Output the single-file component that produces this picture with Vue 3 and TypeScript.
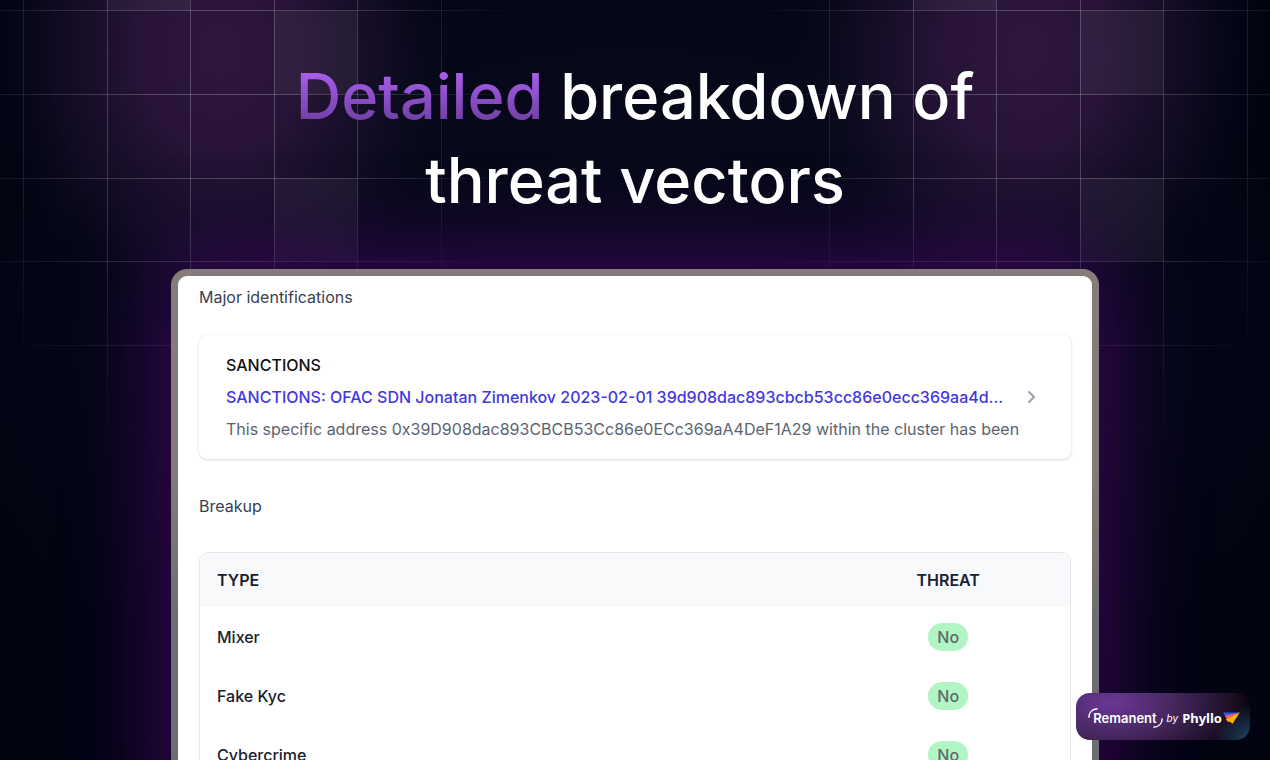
<script setup lang="ts">
interface ThreatRow {
  type: string
  threat: string
}

const rows: ThreatRow[] = [
  { type: 'Mixer', threat: 'No' },
  { type: 'Fake Kyc', threat: 'No' },
  { type: 'Cybercrime', threat: 'No' },
]

const columns: number[] = [23, 107, 190, 274, 357, 441]
const lines: number[] = [10, 94, 178, 261, 345, 428]
const clusters: number[] = [0, 806]
</script>

<template>
  <main class="stage">
    <svg class="backdrop" viewBox="0 0 1270 760" preserveAspectRatio="xMidYMin slice" aria-hidden="true">
      <defs>
        <radialGradient id="halo" gradientUnits="userSpaceOnUse" cx="0" cy="0" r="1" gradientTransform="translate(220 50) scale(235 290)">
          <stop offset="0" stop-color="#2e173e" />
          <stop offset="0.35" stop-color="#2c153b" stop-opacity="0.9" />
          <stop offset="0.7" stop-color="#1e1230" stop-opacity="0.5" />
          <stop offset="1" stop-color="#0a0a1c" stop-opacity="0" />
        </radialGradient>
        <radialGradient id="fade" gradientUnits="userSpaceOnUse" cx="0" cy="0" r="1" gradientTransform="translate(230 90) scale(295 390)">
          <stop offset="0" stop-color="#fff" stop-opacity="0.25" />
          <stop offset="0.45" stop-color="#fff" stop-opacity="0.18" />
          <stop offset="1" stop-color="#fff" stop-opacity="0" />
        </radialGradient>
        <linearGradient id="cell" x1="0" y1="0" x2="1" y2="0">
          <stop offset="0" stop-color="#b0b0b0" stop-opacity="0.06" />
          <stop offset="1" stop-color="#b0b0b0" stop-opacity="0.08" />
        </linearGradient>
      </defs>
      <g v-for="shift in clusters" :key="shift" :transform="`translate(${shift} 0)`">
        <rect x="-20" y="0" width="560" height="420" fill="url(#halo)" />
        <rect x="107" y="0" width="83" height="10" fill="url(#cell)" />
        <rect x="274" y="11" width="83" height="83" fill="url(#cell)" />
        <rect x="274" y="178" width="83" height="83" fill="url(#cell)" />
        <rect v-for="x in columns" :key="`c${x}`" :x="x" y="0" width="1" height="490" fill="url(#fade)" />
        <rect v-for="y in lines" :key="`l${y}`" x="-60" :y="y" width="590" height="1" fill="url(#fade)" />
      </g>
    </svg>

    <h1 class="headline"><span class="accent">Detailed</span> breakdown of<br />threat vectors</h1>

    <div class="frame">
      <div class="panel">
        <h2 class="section-title">Major identifications</h2>
        <article class="finding">
          <div class="finding-text">
            <h3 class="finding-kind">SANCTIONS</h3>
            <a class="finding-link" href="#sanctions">SANCTIONS: OFAC SDN Jonatan Zimenkov 2023-02-01 39d908dac893cbcb53cc86e0ecc369aa4d...</a>
            <p class="finding-note">This specific address 0x39D908dac893CBCB53Cc86e0ECc369aA4DeF1A29 within the cluster has been</p>
          </div>
          <button class="open" type="button" aria-label="Open finding">
            <svg width="10" height="14" viewBox="0 0 10 14" fill="none" stroke="#9ca0aa" stroke-width="2" stroke-linecap="round" stroke-linejoin="round">
              <path d="M2 2l5 5-5 5" />
            </svg>
          </button>
        </article>

        <h2 class="section-title breakup">Breakup</h2>
        <div class="table-box">
          <table class="threats">
            <thead>
              <tr>
                <th scope="col">TYPE</th>
                <th scope="col" class="threat">THREAT</th>
              </tr>
            </thead>
            <tbody>
              <tr v-for="row in rows" :key="row.type">
                <td>{{ row.type }}</td>
                <td class="threat"><span class="pill">{{ row.threat }}</span></td>
              </tr>
            </tbody>
          </table>
        </div>
      </div>
    </div>

    <a class="brand" href="#brand">
      <span class="remanent">
        <svg class="arc" viewBox="0 0 10 10" fill="none" stroke="#fff" stroke-width="1.4"><path d="M0.8 9.8C0.8 4.6 4 1 9.6 0.8" /></svg>
        <span>Remanent</span>
        <svg class="arc arc-end" viewBox="0 0 10 10" fill="none" stroke="#fff" stroke-width="1.4"><path d="M9.2 0.2C9.2 5.4 6 9 0.4 9.2" /></svg>
      </span>
      <em class="by">by</em>
      <span class="phyllo">Phyllo</span>
      <svg class="bird" viewBox="0 0 17 12">
        <path d="M0.2 0.6H16.8L4 4.6H2.2Z" fill="#3159e8" />
        <path d="M16.8 0.6L1.6 3.2L2.8 5.2Z" fill="#a24bd6" />
        <path d="M16.8 0.6L2.4 4.6L4 7.2Z" fill="#ff6a55" />
        <path d="M16.8 0.6L2.8 7.4L5.4 10L6.4 9.4L9.6 11.8Z" fill="#ffb20d" />
      </svg>
    </a>
  </main>
</template>

<style>
body {
  margin: 0;
  background: #020412;
}
</style>

<style scoped>
.stage {
  position: relative;
  display: flex;
  flex-direction: column;
  align-items: center;
  box-sizing: border-box;
  height: 100vh;
  padding: 54px 16px 0;
  overflow: hidden;
  background: radial-gradient(ellipse at 50% 45%, #09091c 0%, #060819 50%, #020412 75%);
  font-family: Inter, "Liberation Sans", sans-serif;
}

.backdrop {
  position: absolute;
  inset: 0;
  width: 100%;
  height: 100%;
}

.headline {
  position: relative;
  z-index: 1;
  margin: 0 0 47px;
  color: #fff;
  font-size: 63px;
  font-weight: 500;
  line-height: 84px;
  text-align: center;
}

.accent {
  background: linear-gradient(180deg, #b062f5 10%, #6a3d9c 90%);
  background-clip: text;
  color: transparent;
}

.frame {
  position: relative;
  flex: none;
  box-sizing: border-box;
  width: 100%;
  max-width: 928px;
  padding: 7px;
  border-radius: 16px;
  background: linear-gradient(180deg, #867c7b 0, #837b79 200px, #6e6c71 360px, #6e6c71 100%);
  box-shadow: 0 0 90px 10px rgba(70, 6, 104, 0.8);
}

.panel {
  box-sizing: border-box;
  padding: 9px 21px 40px;
  border-radius: 9px;
  background: #fff;
}

.section-title {
  margin: 0;
  color: #374151;
  font-size: 16px;
  font-weight: 400;
  line-height: 24px;
}

.breakup {
  margin-top: 35px;
}

.finding {
  display: flex;
  align-items: center;
  justify-content: space-between;
  margin-top: 26px;
  padding: 14px 34px 14px 27px;
  border-radius: 8px;
  background: #fff;
  box-shadow: 0 1px 3px rgba(0, 0, 0, 0.14), 0 0 1px rgba(0, 0, 0, 0.1);
}

.finding-text {
  min-width: 0;
}

.finding-kind,
.finding-link,
.finding-note {
  display: block;
  margin: 0;
  overflow: hidden;
  font-size: 16px;
  line-height: 32px;
  text-overflow: ellipsis;
  white-space: nowrap;
}

.finding-kind {
  color: #111;
  font-weight: 500;
}

.finding-link {
  color: #4338e0;
  font-weight: 500;
  text-decoration: none;
}

.finding-note {
  color: #5b6371;
  font-weight: 400;
}

.open {
  display: flex;
  padding: 0;
  border: 0;
  background: none;
}

.table-box {
  margin-top: 34px;
  overflow: hidden;
  border: 1px solid #e5e7ea;
  border-radius: 9px;
}

.threats {
  width: 100%;
  border-collapse: collapse;
  color: #1a202e;
  font-size: 16px;
  line-height: 24px;
  text-align: left;
}

.threats th {
  height: 54px;
  padding: 0 17px;
  background: #f8f9fb;
  font-weight: 600;
}

.threats td {
  height: 59px;
  padding: 0 17px;
  font-weight: 500;
}

.threats .threat {
  width: 28%;
  padding: 0;
  text-align: center;
}

.pill {
  display: inline-block;
  padding: 2px 9px;
  border-radius: 14px;
  background: #b2f5c4;
  color: #5b6b6b;
}

.brand {
  position: absolute;
  right: 20px;
  bottom: 20px;
  display: flex;
  align-items: center;
  box-sizing: border-box;
  height: 47px;
  padding: 2px 10px 0 12px;
  border-radius: 14px;
  background:
    radial-gradient(circle at 102% 110%, #28587f 0, rgba(30, 66, 98, 0.7) 18px, rgba(0, 0, 0, 0) 40px),
    radial-gradient(ellipse 150px 80px at 20% 20%, #6b3796 0, #482862 40%, #1d1025 80%, #000 100%);
  color: #fff;
  text-decoration: none;
}

.remanent {
  display: flex;
  align-items: center;
  font-size: 13px;
  font-weight: 600;
  line-height: 20px;
}

.arc {
  align-self: flex-start;
  width: 10px;
  height: 10px;
  margin-right: -5px;
}

.arc-end {
  align-self: flex-end;
  margin-right: 0;
  margin-left: -4px;
}

.by {
  margin: 0 4px;
  font-size: 10px;
  line-height: 20px;
}

.phyllo {
  font-family: "Noto Sans", sans-serif;
  font-size: 13px;
  font-weight: 700;
  line-height: 20px;
}

.bird {
  flex: none;
  width: 17px;
  height: 12px;
  margin-left: 1px;
}
</style>
